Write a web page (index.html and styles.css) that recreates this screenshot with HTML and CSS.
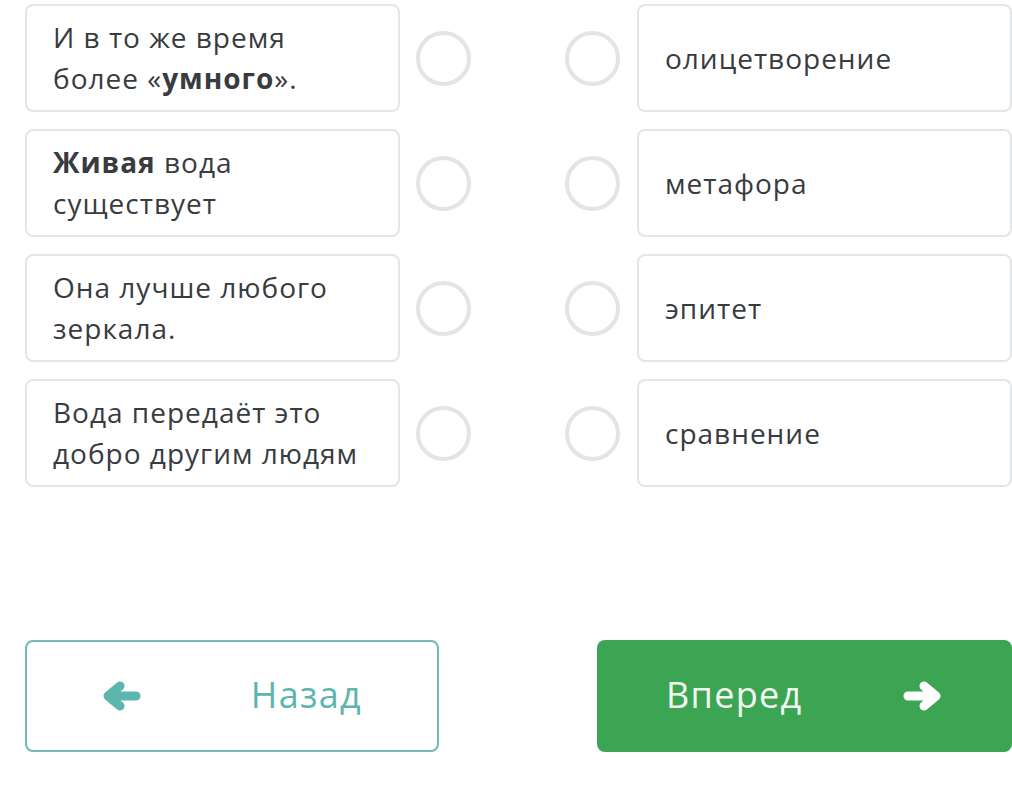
FILE: index.html
```html
<!DOCTYPE html>
<html lang="ru">
<head>
<meta charset="utf-8">
<title>Сопоставление</title>
<link rel="stylesheet" href="styles.css">
</head>
<body>
<main class="quiz">
  <section class="pairs">
    <div class="card"><p class="label">И в то же время более «<b>умного</b>».</p></div>
    <span class="radio radio-left"></span>
    <span class="radio radio-right"></span>
    <div class="card"><p class="label">олицетворение</p></div>

    <div class="card"><p class="label"><b>Живая</b> вода существует</p></div>
    <span class="radio radio-left"></span>
    <span class="radio radio-right"></span>
    <div class="card"><p class="label">метафора</p></div>

    <div class="card"><p class="label">Она лучше любого зеркала.</p></div>
    <span class="radio radio-left"></span>
    <span class="radio radio-right"></span>
    <div class="card"><p class="label">эпитет</p></div>

    <div class="card"><p class="label">Вода передаёт это добро другим людям</p></div>
    <span class="radio radio-left"></span>
    <span class="radio radio-right"></span>
    <div class="card"><p class="label">сравнение</p></div>
  </section>

  <nav class="nav">
    <button class="btn btn-back" type="button">
      <svg class="arrow" viewBox="0 0 38 30" width="38" height="30" aria-hidden="true">
        <path d="M17 5 L5 15 L17 25 M5 15 L33 15" fill="none" stroke="currentColor" stroke-width="9" stroke-linecap="round" stroke-linejoin="round"/>
      </svg>
      <span>Назад</span>
    </button>
    <button class="btn btn-next" type="button">
      <span>Вперед</span>
      <svg class="arrow" viewBox="0 0 38 30" width="38" height="30" aria-hidden="true">
        <path d="M21 5 L33 15 L21 25 M33 15 L5 15" fill="none" stroke="currentColor" stroke-width="9" stroke-linecap="round" stroke-linejoin="round"/>
      </svg>
    </button>
  </nav>
</main>
</body>
</html>
```

FILE: styles.css
```css
* { box-sizing: border-box; }

html, body {
  margin: 0;
  padding: 0;
  background: #ffffff;
}

body {
  font-family: "Open Sans", "Noto Sans", "DejaVu Sans", sans-serif;
  color: #383b40;
}

.quiz {
  width: 987px;
  margin-left: 25px;
  padding-top: 4px;
}

.pairs {
  display: grid;
  grid-template-columns: 375px 1fr 1fr 375px;
  grid-auto-rows: 108px;
  row-gap: 17px;
  align-items: center;
}

.card {
  height: 108px;
  border: 2px solid #e4e5e7;
  border-radius: 8px;
  padding: 0 36px 0 26px;
  display: flex;
  align-items: center;
}

.label {
  margin: 0;
  font-size: 28px;
  line-height: 41px;
  letter-spacing: 1px;
}

.label b {
  font-weight: 700;
}

.radio {
  width: 55px;
  height: 55px;
  border: 4px solid #e2e4e7;
  border-radius: 50%;
}

.radio-left {
  justify-self: start;
  margin-left: 16px;
}

.radio-right {
  justify-self: end;
  margin-right: 17px;
}

.nav {
  display: flex;
  justify-content: space-between;
  margin-top: 153px;
}

.btn {
  width: 414px;
  height: 112px;
  border-radius: 8px;
  font-family: inherit;
  font-size: 36px;
  letter-spacing: 1.3px;
  display: flex;
  align-items: center;
  justify-content: space-between;
  cursor: pointer;
}

.btn-back {
  background: #ffffff;
  border: 2px solid #74b9b3;
  color: #5db5ae;
  padding: 0 75px 0 76px;
}

.btn-next {
  width: 415px;
  background: #3ca553;
  border: none;
  color: #f1faf1;
  padding: 0 71px 0 69px;
}

.btn span {
  line-height: 1;
  padding-bottom: 2px;
}

.arrow {
  display: block;
  flex: none;
}

.btn-back .arrow { color: #5bb6ad; }
.btn-next .arrow { color: #ffffff; }
```
